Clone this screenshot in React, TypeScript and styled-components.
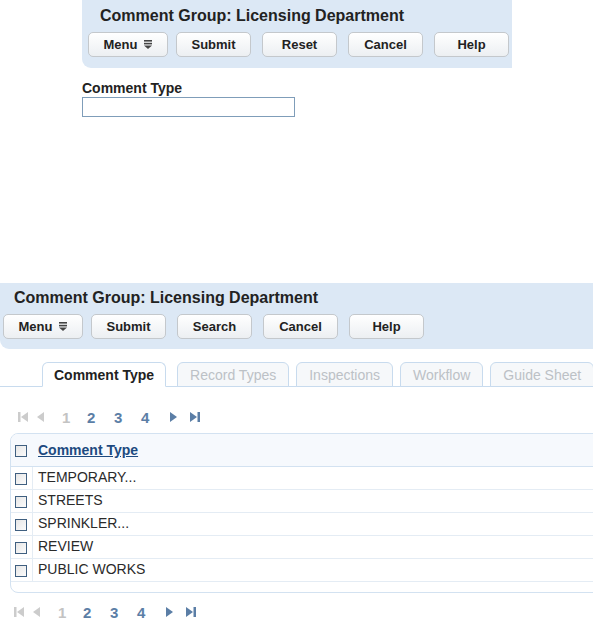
import styled, { createGlobalStyle } from "styled-components";

const GlobalStyle = createGlobalStyle`
    html, body {
        margin: 0;
        padding: 0;
        background: #ffffff;
    }
    body {
        font-family: "Liberation Sans", Arial, sans-serif;
        color: #222222;
        overflow: hidden;
    }
`;

const MenuIcon = () => (
    <svg width="8" height="9" viewBox="0 0 8 9">
        <rect x="0" y="0" width="8" height="1.6" fill="#444" />
        <rect x="0" y="2.8" width="8" height="1.6" fill="#444" />
        <polygon points="0,5.6 8,5.6 4,9" fill="#444" />
    </svg>
);

const FirstIcon = ({ color }: { color: string }) => (
    <svg width="10" height="10" viewBox="0 0 10 10">
        <rect x="0" y="0" width="2.5" height="10" fill={color} />
        <polygon points="10,0 10,10 3,5" fill={color} />
    </svg>
);

const PrevIcon = ({ color }: { color: string }) => (
    <svg width="8" height="10" viewBox="0 0 8 10">
        <polygon points="8,0 8,10 1,5" fill={color} />
    </svg>
);

const NextIcon = ({ color }: { color: string }) => (
    <svg width="8" height="10" viewBox="0 0 8 10">
        <polygon points="0,0 0,10 7,5" fill={color} />
    </svg>
);

const LastIcon = ({ color }: { color: string }) => (
    <svg width="10" height="10" viewBox="0 0 10 10">
        <polygon points="0,0 0,10 7,5" fill={color} />
        <rect x="7.5" y="0" width="2.5" height="10" fill={color} />
    </svg>
);

type ToolbarProps = {
    third: string;
};

const Toolbar = ({ third }: ToolbarProps) => (
    <ButtonRow>
        <MenuButton>
            Menu <MenuIcon />
        </MenuButton>
        <Button>Submit</Button>
        <Button>{third}</Button>
        <Button>Cancel</Button>
        <Button>Help</Button>
    </ButtonRow>
);

const Pager = ({ $offset, $top }: { $offset: number; $top: number }) => (
    <PagerRow $offset={$offset} $top={$top}>
        <PagerIcon $width={18}>
            <FirstIcon color="#cccccc" />
        </PagerIcon>
        <PagerIcon $width={26}>
            <PrevIcon color="#cccccc" />
        </PagerIcon>
        <PageNum $current $width={25}>
            1
        </PageNum>
        <PageNum $width={27}>2</PageNum>
        <PageNum $width={27}>3</PageNum>
        <PageNum $width={29}>4</PageNum>
        <PagerIcon $width={20}>
            <NextIcon color="#5b7ea6" />
        </PagerIcon>
        <PagerIcon $width={12}>
            <LastIcon color="#5b7ea6" />
        </PagerIcon>
    </PagerRow>
);

const rows = ["TEMPORARY...", "STREETS", "SPRINKLER...", "REVIEW", "PUBLIC WORKS"];
const tabs = ["Comment Type", "Record Types", "Inspections", "Workflow", "Guide Sheet"];

const App = () => {
    return (
        <Page>
            <GlobalStyle />
            <TopPanel>
                <Title $indent={12}>Comment Group: Licensing Department</Title>
                <Toolbar third="Reset" />
            </TopPanel>

            <Field>
                <FieldLabel>Comment Type</FieldLabel>
                <TextInput />
            </Field>

            <BottomPanel>
                <Title $indent={11}>Comment Group: Licensing Department</Title>
                <Toolbar third="Search" />
            </BottomPanel>

            <TabBar>
                {tabs.map((t, i) => (
                    <Tab key={t} $active={i === 0}>
                        {t}
                    </Tab>
                ))}
            </TabBar>

            <Pager $offset={18} $top={20} />

            <Table>
                <HeaderRow>
                    <CheckCell>
                        <Checkbox />
                    </CheckCell>
                    <HeaderLink>Comment Type</HeaderLink>
                </HeaderRow>
                {rows.map((r) => (
                    <Row key={r}>
                        <CheckCell $divider>
                            <Checkbox />
                        </CheckCell>
                        <RowText>{r}</RowText>
                    </Row>
                ))}
                <TableFoot />
            </Table>

            <Pager $offset={14} $top={9} />
        </Page>
    );
};

const Page = styled.div`
    width: 593px;
    height: 621px;
    overflow: hidden;
`;

const TopPanel = styled.div`
    margin-left: 82px;
    width: 430px;
    height: 68px;
    box-sizing: border-box;
    padding: 6px 0 0 6px;
    background: #dce8f5;
    border-bottom-left-radius: 9px;
    overflow: hidden;
`;

const BottomPanel = styled.div`
    margin-top: 166px;
    width: 593px;
    height: 66px;
    box-sizing: border-box;
    padding: 5px 0 0 3px;
    background: #dce8f5;
    border-bottom-left-radius: 9px;
`;

const Title = styled.div<{ $indent: number }>`
    font-size: 16px;
    font-weight: 700;
    color: #222;
    line-height: 19px;
    margin-left: ${({ $indent }) => $indent}px;
    height: 26px;
`;

const ButtonRow = styled.div`
    display: flex;
    gap: 11px;
    white-space: nowrap;
`;

const Button = styled.button`
    flex: none;
    width: 75px;
    height: 25px;
    padding: 0;
    border: 1px solid #c4c8cc;
    border-radius: 5px;
    background: linear-gradient(#ffffff, #eceff2);
    font-family: "Liberation Sans", Arial, sans-serif;
    font-size: 13px;
    font-weight: 700;
    color: #222;
    display: flex;
    align-items: center;
    justify-content: center;
    gap: 7px;
`;

const MenuButton = styled(Button)`
    width: 80px;
    margin-right: -3px;
`;

const Field = styled.div`
    margin: 12px 0 0 82px;
`;

const FieldLabel = styled.div`
    font-size: 14px;
    font-weight: 700;
    color: #222;
    line-height: 16px;
    margin-bottom: 1px;
`;

const TextInput = styled.input`
    display: block;
    box-sizing: border-box;
    width: 213px;
    height: 20px;
    border: 1px solid #7f9db9;
    margin: 0;
    padding: 0 3px;
    background: #fff;
`;

const TabBar = styled.div`
    margin-top: 12px;
    display: flex;
    align-items: flex-end;
    gap: 7px;
    padding-left: 42px;
    height: 25px;
    border-bottom: 1px solid #c8dbee;
`;

const Tab = styled.div<{ $active?: boolean }>`
    flex: none;
    height: 25px;
    box-sizing: border-box;
    padding: 0 ${({ $active }) => ($active ? 11 : 12)}px;
    margin-right: ${({ $active }) => ($active ? 4 : 0)}px;
    margin-bottom: -1px;
    border: 1px solid #c8dbee;
    border-bottom: ${({ $active }) => ($active ? "1px solid #ffffff" : "1px solid #c8dbee")};
    border-radius: 6px 6px 0 0;
    background: ${({ $active }) => ($active ? "#ffffff" : "#f6f8fa")};
    font-size: 14px;
    font-weight: ${({ $active }) => ($active ? 700 : 400)};
    color: ${({ $active }) => ($active ? "#222" : "#bcc1c6")};
    line-height: 25px;
    white-space: nowrap;
`;

const PagerRow = styled.div<{ $offset: number; $top: number }>`
    display: flex;
    align-items: center;
    height: 20px;
    margin: ${({ $top }) => $top}px 0 0 ${({ $offset }) => $offset}px;
`;

const PagerIcon = styled.span<{ $width: number }>`
    display: flex;
    align-items: center;
    width: ${({ $width }) => $width}px;
    flex: none;
`;

const PageNum = styled.span<{ $current?: boolean; $width: number }>`
    flex: none;
    width: ${({ $width }) => $width}px;
    font-size: 15px;
    font-weight: 700;
    color: ${({ $current }) => ($current ? "#c3c3c3" : "#5b7ea6")};
`;

const Table = styled.div`
    margin: 6px 0 0 10px;
    width: 600px;
    border: 1px solid #d3e2f1;
    border-radius: 8px 0 0 8px;
    overflow: hidden;
`;

const HeaderRow = styled.div`
    display: flex;
    align-items: center;
    height: 32px;
    background: #f6f9fd;
    border-bottom: 1px solid #d3e2f1;
`;

const Row = styled.div`
    display: flex;
    align-items: center;
    height: 22px;
    border-bottom: 1px solid #e4ecf4;
`;

const CheckCell = styled.div<{ $divider?: boolean }>`
    flex: none;
    width: 17px;
    height: 100%;
    display: flex;
    align-items: center;
    padding-left: 4px;
    border-right: ${({ $divider }) => ($divider ? "1px solid #e4ecf4" : "1px solid transparent")};
    margin-right: 5px;
`;

const Checkbox = styled.span`
    display: block;
    box-sizing: border-box;
    width: 12px;
    height: 12px;
    margin-top: 1px;
    border: 1px solid #3f5f80;
    background: linear-gradient(135deg, #e6e6e6, #fbfbfb);
`;

const HeaderLink = styled.span`
    font-size: 14px;
    font-weight: 700;
    color: #1d4a80;
    text-decoration: underline;
`;

const RowText = styled.span`
    font-size: 14px;
    color: #2a2a2a;
    margin-top: -2px;
`;

const TableFoot = styled.div`
    height: 10px;
`;

export default App;
